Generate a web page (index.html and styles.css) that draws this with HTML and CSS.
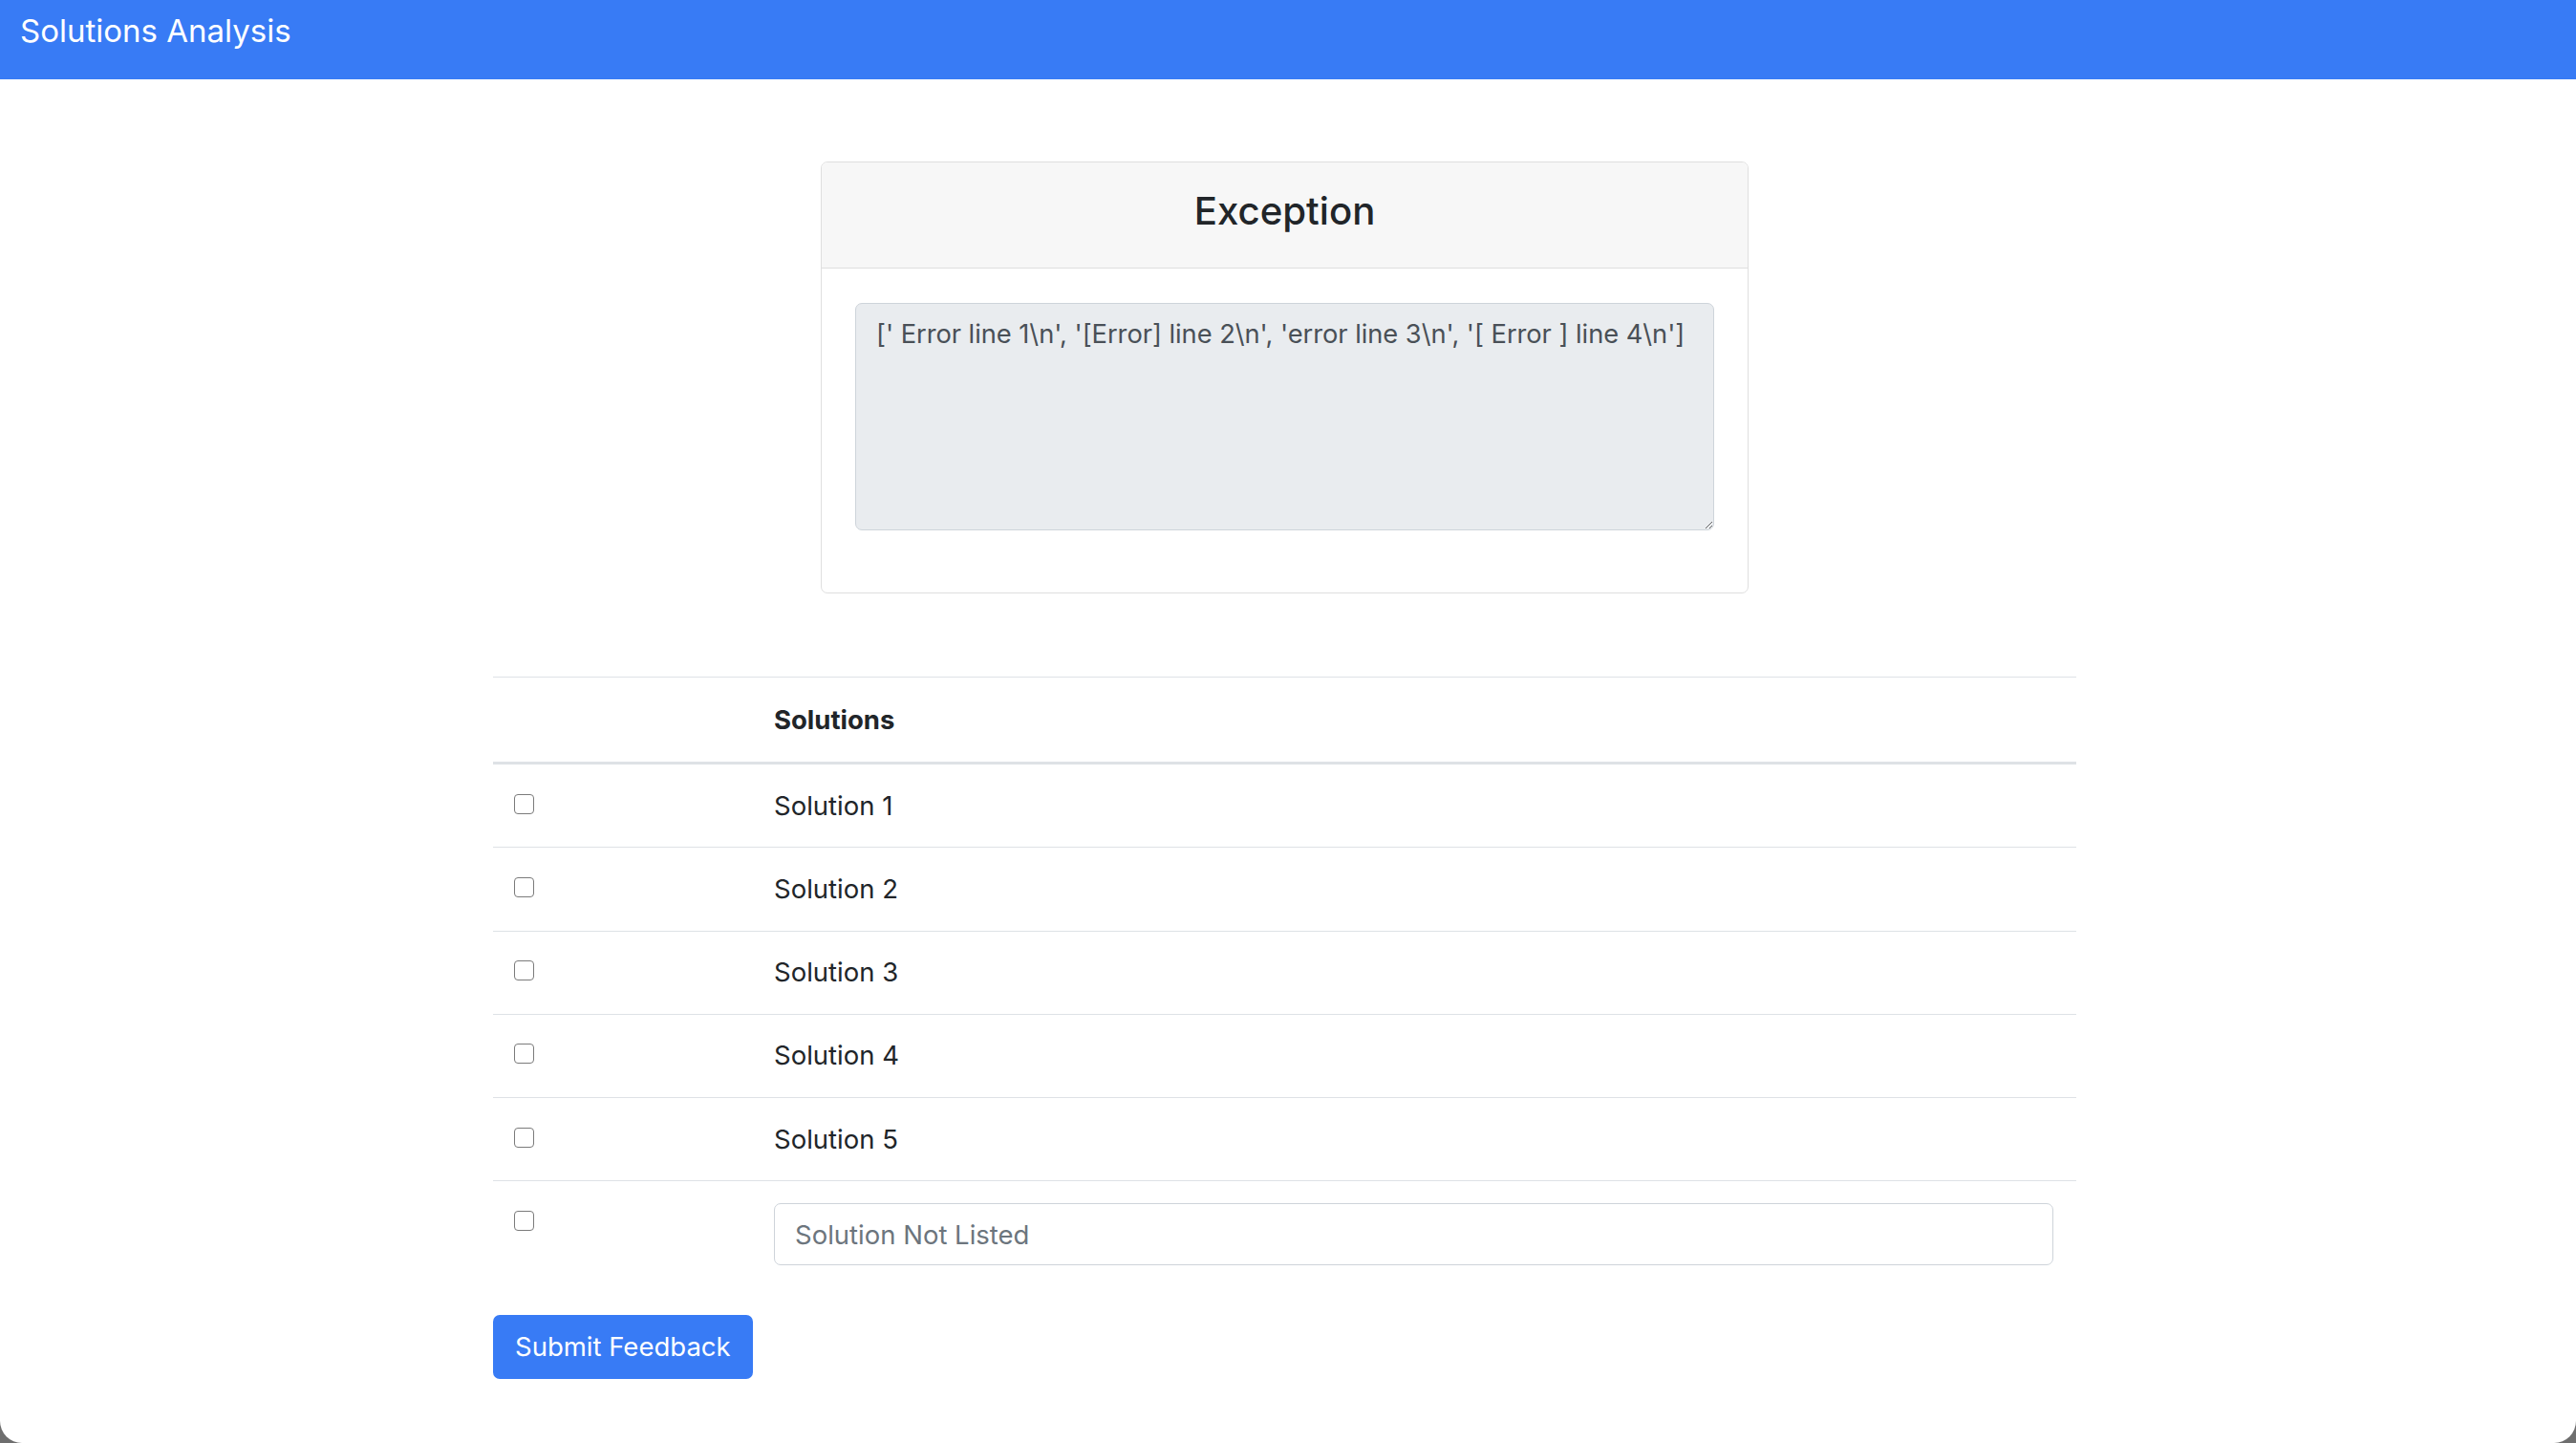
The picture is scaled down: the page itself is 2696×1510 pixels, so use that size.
FILE: index.html
```html
<!DOCTYPE html>
<html lang="en">
<head>
<meta charset="utf-8">
<title>Solutions Analysis</title>
<link rel="stylesheet" href="styles.css">
</head>
<body>
<nav class="navbar">
  <span class="brand">Solutions Analysis</span>
</nav>
<main class="container">
  <section class="card">
    <div class="card-header">
      <h4 class="card-title">Exception</h4>
    </div>
    <div class="card-body">
      <textarea class="exception-text" readonly>[' Error line 1\n', '[Error] line 2\n', 'error line 3\n', '[ Error ] line 4\n']</textarea>
    </div>
  </section>

  <form class="feedback">
    <table class="solutions">
      <thead>
        <tr>
          <th class="col-check"></th>
          <th>Solutions</th>
        </tr>
      </thead>
      <tbody>
        <tr><td class="col-check"><input type="checkbox" class="check"></td><td>Solution 1</td></tr>
        <tr><td class="col-check"><input type="checkbox" class="check"></td><td>Solution 2</td></tr>
        <tr><td class="col-check"><input type="checkbox" class="check"></td><td>Solution 3</td></tr>
        <tr><td class="col-check"><input type="checkbox" class="check"></td><td>Solution 4</td></tr>
        <tr><td class="col-check"><input type="checkbox" class="check"></td><td>Solution 5</td></tr>
        <tr class="last-row"><td class="col-check"><input type="checkbox" class="check"></td><td class="input-cell"><input type="text" class="text-input" placeholder="Solution Not Listed"></td></tr>
      </tbody>
    </table>
    <button type="button" class="btn-primary">Submit Feedback</button>
  </form>
</main>
</body>
</html>
```

FILE: styles.css
```css
html {
  background: #6e6e6e;
}

body {
  margin: 0;
  min-height: 100vh;
  background: #ffffff;
  border-radius: 0 0 23px 23px;
  font-family: "Inter", "Liberation Sans", sans-serif;
  font-size: 27.5px;
  line-height: 41px;
  color: #212529;
  padding-right: 7px;
  box-sizing: border-box;
  overflow: hidden;
}

.navbar {
  height: 83px;
  background: #387bf5;
  margin-right: -7px;
  padding: 7px 0 0 21px;
  box-sizing: border-box;
}

.brand {
  display: block;
  color: #ffffff;
  font-size: 33px;
  line-height: 51px;
}

.container {
  width: 1657px;
  margin: 0 auto;
}

.card {
  width: 971px;
  margin: 86px auto 0;
  border: 1px solid #dfdfdf;
  border-radius: 7px;
  box-sizing: border-box;
  overflow: hidden;
}

.card-header {
  height: 111px;
  box-sizing: border-box;
  padding-top: 26px;
  background: #f7f7f7;
  border-bottom: 1px solid #dfdfdf;
  text-align: center;
}

.card-title {
  margin: 0;
  font-size: 40.2px;
  line-height: 50px;
  font-weight: 500;
  color: #212529;
}

.card-body {
  padding: 36px 35px 65px;
}

.exception-text {
  display: block;
  width: 100%;
  height: 238px;
  box-sizing: border-box;
  margin: 0;
  padding: 11px 21px;
  font-family: inherit;
  font-size: 27.3px;
  letter-spacing: -0.05px;
  line-height: 41px;
  color: #495057;
  background: #e9ecef;
  border: 1px solid #ced4da;
  border-radius: 7px;
  resize: vertical;
  outline: none;
}

.feedback {
  margin-top: 87px;
}

.solutions {
  width: 100%;
  border-collapse: separate;
  border-spacing: 0;
  margin-bottom: 29px;
}

.solutions th {
  text-align: left;
  font-weight: 700;
  padding: 24.2px 21px 22.8px;
  border-top: 1px solid #dee2e6;
  border-bottom: 3px solid #dee2e6;
  vertical-align: top;
}

.solutions td {
  padding: 22.65px 24px 22.65px 21px;
  border-bottom: 1px solid #dee2e6;
  vertical-align: top;
}

.solutions .last-row td {
  border-bottom: none;
}

.col-check {
  width: 228px;
}

.check {
  appearance: none;
  -webkit-appearance: none;
  display: block;
  width: 21px;
  height: 21px;
  margin: 8px 0 0 1px;
  box-sizing: border-box;
  border: 1.5px solid #7b7b7b;
  border-radius: 4px;
  background: #ffffff;
}

.text-input {
  display: block;
  width: 100%;
  height: 65px;
  box-sizing: border-box;
  margin: 0;
  padding: 0 21px;
  font-family: inherit;
  font-size: 27.5px;
  color: #495057;
  background: #ffffff;
  border: 1px solid #ced4da;
  border-radius: 7px;
  outline: none;
}

.text-input::placeholder {
  color: #6c757d;
}

.btn-primary {
  display: block;
  height: 67px;
  padding: 0 23px;
  font-family: inherit;
  font-size: 27.5px;
  line-height: 41px;
  color: #ffffff;
  background: #387bf5;
  border: none;
  border-radius: 7px;
}
```
